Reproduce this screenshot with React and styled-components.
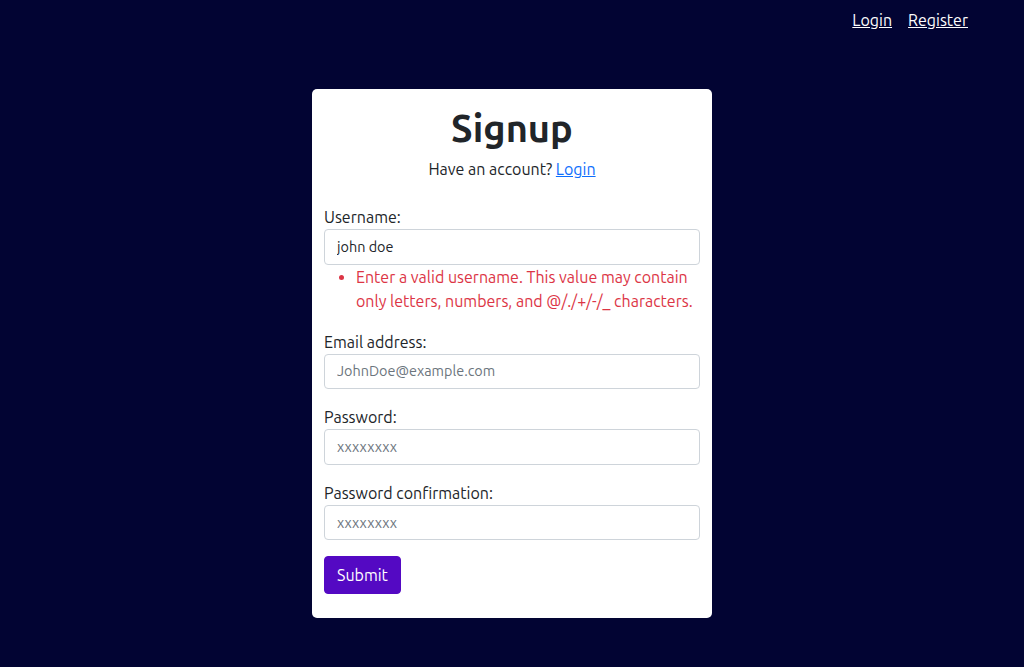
import React, { useState } from 'react';
import styled, { createGlobalStyle } from 'styled-components';

const GlobalStyle = createGlobalStyle`
  html, body {
    margin: 0;
    padding: 0;
    background: #020433;
    font-family: Ubuntu, "Noto Sans", "Open Sans", sans-serif;
    color: #212529;
  }
  * { box-sizing: border-box; }
`;

const Page = styled.div`
  min-height: 667px;
  background: #020433;
`;

const Nav = styled.nav`
  display: flex;
  justify-content: flex-end;
  gap: 16px;
  padding: 8px 56px 0 0;
  height: 89px;
`;

const NavLink = styled.a`
  color: #ffffff;
  font-size: 16px;
  line-height: 24px;
  text-decoration: underline;
  cursor: pointer;
`;

const Card = styled.div`
  width: 400px;
  margin: 0 auto;
  background: #ffffff;
  border-radius: 5px;
  padding: 16px 12px 24px;
`;

const Title = styled.h1`
  margin: 0 0 6px;
  text-align: center;
  font-size: 38px;
  line-height: 46px;
  font-weight: 700;
  color: #212529;
`;

const Subtitle = styled.p`
  margin: 0 0 24px;
  text-align: center;
  font-size: 16px;
  line-height: 24px;
  color: #212529;

  a {
    color: #0d6efd;
    text-decoration: underline;
  }
`;

const Field = styled.div`
  margin-bottom: ${props => (props.$hasError ? 0 : 16)}px;
`;

const Label = styled.label`
  display: block;
  font-size: 16px;
  line-height: 24px;
  color: #212529;
`;

const Input = styled.input`
  display: block;
  width: 100%;
  height: 35.6px;
  padding: 6px 12px;
  font-family: inherit;
  font-size: 14.4px;
  line-height: 21.6px;
  color: #212529;
  background: #fff;
  border: 1px solid #ced4da;
  border-radius: 4px;
  outline: none;

  &::placeholder {
    color: #6c757d;
  }
`;

const ErrorList = styled.ul`
  margin: 0 0 17px;
  padding-left: 32px;
  color: #dc3545;
  font-size: 16px;
  line-height: 24px;
`;

const SubmitButton = styled.button`
  display: inline-block;
  height: 38px;
  padding: 6px 12px;
  font-family: inherit;
  font-size: 16px;
  line-height: 24px;
  color: #ffffff;
  background: #5409c3;
  border: 1px solid #5409c3;
  border-radius: 4px;
  cursor: pointer;
`;

const App = () => {
  const [values, setValues] = useState({
    username: 'john doe',
    email: '',
    password: '',
    confirm: '',
  });

  const update = key => e => setValues(prev => ({ ...prev, [key]: e.target.value }));

  return (
    <Page>
      <GlobalStyle />
      <Nav>
        <NavLink>Login</NavLink>
        <NavLink>Register</NavLink>
      </Nav>
      <Card>
        <Title>Signup</Title>
        <Subtitle>
          Have an account? <a>Login</a>
        </Subtitle>
        <form onSubmit={e => e.preventDefault()}>
          <Field $hasError>
            <Label>Username:</Label>
            <Input value={values.username} onChange={update('username')} />
          </Field>
          <ErrorList>
            <li>Enter a valid username. This value may contain only letters, numbers, and @/./+/-/_ characters.</li>
          </ErrorList>
          <Field>
            <Label>Email address:</Label>
            <Input placeholder="JohnDoe@example.com" value={values.email} onChange={update('email')} />
          </Field>
          <Field>
            <Label>Password:</Label>
            <Input type="password" placeholder="xxxxxxxx" value={values.password} onChange={update('password')} />
          </Field>
          <Field>
            <Label>Password confirmation:</Label>
            <Input type="password" placeholder="xxxxxxxx" value={values.confirm} onChange={update('confirm')} />
          </Field>
          <SubmitButton type="submit">Submit</SubmitButton>
        </form>
      </Card>
    </Page>
  );
};

export default App;
